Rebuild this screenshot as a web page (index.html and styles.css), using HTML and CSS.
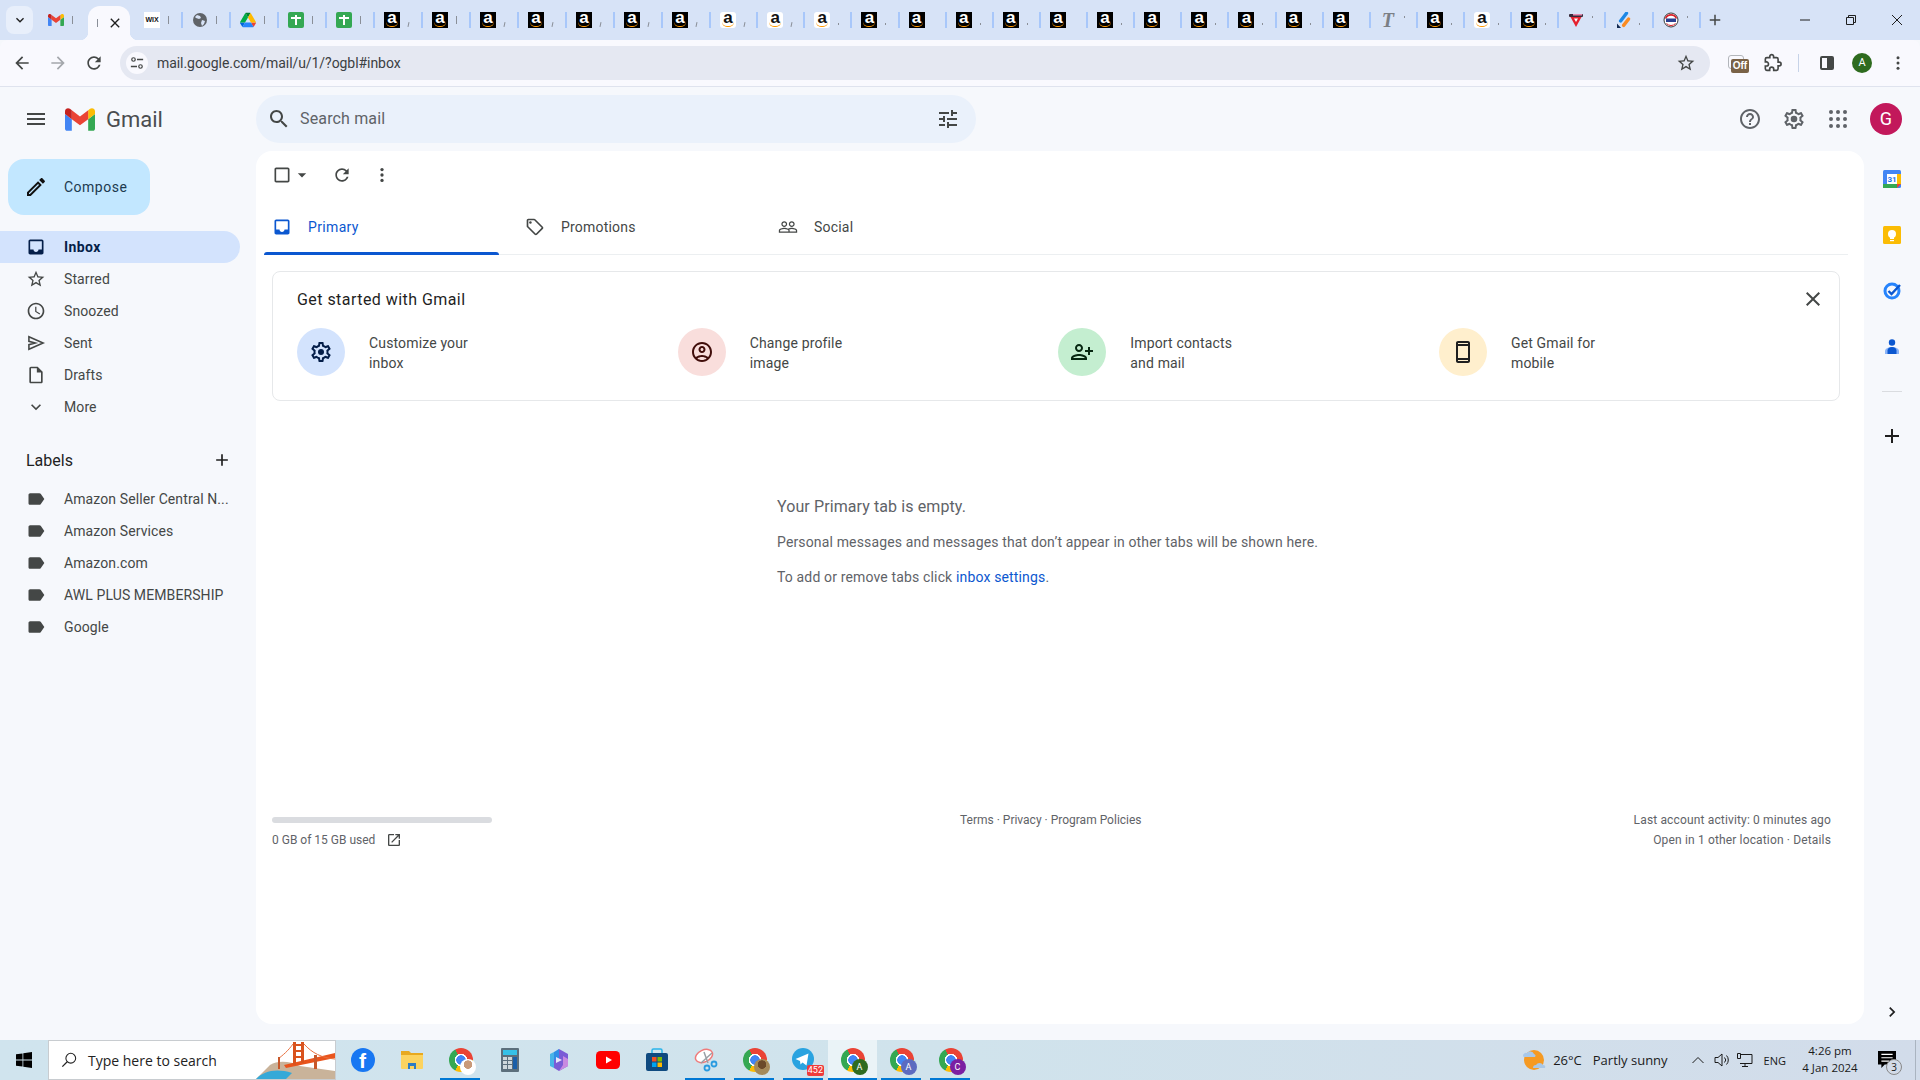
FILE: index.html
```html
<!DOCTYPE html>
<html lang="en">

<head>
    <meta charset="UTF-8">
    <meta name="viewport" content="width=device-width, initial-scale=1.0">
    <title>Inbox - Gmail</title>
    <link rel="stylesheet" href="styles.css">
</head>

<body>

    <!-- Icones reutilisees -->
    <svg class="defs" width="0" height="0">
        <symbol id="i-star" viewBox="0 0 24 24"><path d="M22 9.24l-7.19-.62L12 2 9.19 8.63 2 9.24l5.46 4.73L5.82 21 12 17.27 18.18 21l-1.63-7.03L22 9.24zM12 15.4l-3.76 2.27 1-4.28-3.32-2.88 4.38-.38L12 6.1l1.71 4.04 4.38.38-3.32 2.88 1 4.28L12 15.4z"/></symbol>
        <symbol id="i-label" viewBox="0 0 24 24"><path d="M17.63 5.84C17.27 5.33 16.67 5 16 5L5 5.01C3.9 5.01 3 5.9 3 7v10c0 1.1.9 1.99 2 1.99L16 19c.67 0 1.27-.33 1.63-.84L22 12l-4.37-6.16z"/></symbol>
        <symbol id="i-add" viewBox="0 0 24 24"><path d="M19 13h-6v6h-2v-6H5v-2h6V5h2v6h6v2z"/></symbol>
        <symbol id="i-inbox" viewBox="0 0 24 24"><path d="M19 3H5c-1.1 0-2 .9-2 2v14c0 1.1.9 2 2 2h14c1.1 0 2-.9 2-2V5c0-1.1-.9-2-2-2zm0 12h-4c0 1.66-1.35 3-3 3s-3-1.34-3-3H5V5h14v10z"/></symbol>
    </svg>

    <!-- Barre d'onglets du navigateur -->
    <div class="tabstrip">
        <button class="tab-search"><svg class="ico-16" viewBox="0 0 24 24"><path d="M7.41 8.59L12 13.17l4.59-4.58L18 10l-6 6-6-6z"/></svg></button>
        <div class="tabs">
            <div class="tab"><svg class="fav" viewBox="52 42 88 66"><path fill="#4285f4" d="M58 108h14V74L52 59v43c0 3.32 2.69 6 6 6"/><path fill="#34a853" d="M120 108h14c3.32 0 6-2.69 6-6V59l-20 15"/><path fill="#fbbc04" d="M120 48v26l20-15v-8c0-7.42-8.47-11.65-14.4-7.2"/><path fill="#ea4335" d="M72 74V48l24 18 24-18v26L96 92"/><path fill="#c5221f" d="M52 51v8l20 15V48l-5.6-4.2c-5.94-4.45-14.4-.22-14.4 7.2"/></svg><i class="mark"></i></div>
            <div class="tab tab-active"><i class="mark"></i><svg class="tab-close" viewBox="0 0 24 24"><path d="M19 6.41L17.59 5 12 10.59 6.41 5 5 6.41 10.59 12 5 17.59 6.41 19 12 13.41 17.59 19 19 17.59 13.41 12z"/></svg></div>
            <div class="tab"><span class="fav fav-wix">WIX</span><i class="mark"></i></div>
            <div class="tab sep"><svg class="fav" viewBox="0 0 16 16"><circle cx="8" cy="8" r="7" fill="#5f6368"/><path fill="#d7e3f7" d="M5 3l3 1 1 2-2 1-3-1-1-1zM10 8l3 1-1 3-2 2-1-3z"/></svg><i class="mark"></i></div>
            <div class="tab sep"><svg class="fav" viewBox="0 0 87.3 78"><path d="m6.6 66.85 3.85 6.65c.8 1.4 1.95 2.5 3.3 3.3l13.75-23.8h-27.5c0 1.55.4 3.1 1.2 4.5z" fill="#0066da"/><path d="m43.65 25-13.75-23.8c-1.35.8-2.5 1.9-3.3 3.3l-25.4 44a9.06 9.06 0 0 0 -1.2 4.5h27.5z" fill="#00ac47"/><path d="m73.55 76.8c1.35-.8 2.5-1.9 3.3-3.3l1.6-2.75 7.65-13.25c.8-1.4 1.2-2.95 1.2-4.5h-27.502l5.852 11.5z" fill="#ea4335"/><path d="m43.65 25 13.75-23.8c-1.35-.8-2.9-1.2-4.5-1.2h-18.5c-1.6 0-3.15.45-4.5 1.2z" fill="#00832d"/><path d="m59.8 53h-32.3l-13.75 23.8c1.35.8 2.9 1.2 4.5 1.2h50.8c1.6 0 3.15-.45 4.5-1.2z" fill="#2684fc"/><path d="m73.4 26.5-12.7-22c-.8-1.4-1.95-2.5-3.3-3.3l-13.75 23.8 16.15 28h27.45c0-1.55-.4-3.1-1.2-4.5z" fill="#ffba00"/></svg><i class="mark"></i></div>
            <div class="tab sep"><span class="fav fav-sheet"></span><i class="mark"></i></div>
            <div class="tab sep"><span class="fav fav-sheet"></span><i class="mark"></i></div>
            <div class="tab sep"><span class="fav amz">a</span><i class="mark short"></i></div>
            <div class="tab sep"><span class="fav amz">a</span><i class="mark"></i></div>
            <div class="tab sep"><span class="fav amz">a</span><i class="mark short"></i></div>
            <div class="tab sep"><span class="fav amz">a</span><i class="mark short"></i></div>
            <div class="tab sep"><span class="fav amz">a</span><i class="mark short"></i></div>
            <div class="tab sep"><span class="fav amz">a</span><i class="mark short"></i></div>
            <div class="tab sep"><span class="fav amz">a</span><i class="mark short"></i></div>
            <div class="tab sep narrow"><span class="fav amz light">a</span><i class="mark short"></i></div>
            <div class="tab sep narrow"><span class="fav amz light">a</span><i class="mark short"></i></div>
            <div class="tab sep narrow"><span class="fav amz light">a</span><i class="mark dot"></i></div>
            <div class="tab sep narrow"><span class="fav amz">a</span><i class="mark dot"></i></div>
            <div class="tab sep narrow"><span class="fav amz">a</span></div>
            <div class="tab sep narrow"><span class="fav amz">a</span><i class="mark dot"></i></div>
            <div class="tab sep narrow"><span class="fav amz">a</span><i class="mark dot"></i></div>
            <div class="tab sep narrow"><span class="fav amz">a</span></div>
            <div class="tab sep narrow"><span class="fav amz">a</span><i class="mark dot"></i></div>
            <div class="tab sep narrow"><span class="fav amz">a</span></div>
            <div class="tab sep narrow"><span class="fav amz">a</span><i class="mark dot"></i></div>
            <div class="tab sep narrow"><span class="fav amz">a</span><i class="mark dot"></i></div>
            <div class="tab sep narrow"><span class="fav amz">a</span><i class="mark dot"></i></div>
            <div class="tab sep narrow"><span class="fav amz">a</span></div>
            <div class="tab sep narrow"><span class="fav fav-t">T</span><i class="mark dot up"></i></div>
            <div class="tab sep narrow"><span class="fav amz">a</span><i class="mark dot"></i></div>
            <div class="tab sep narrow"><span class="fav amz light">a</span><i class="mark dot"></i></div>
            <div class="tab sep narrow"><span class="fav amz">a</span><i class="mark dot"></i></div>
            <div class="tab sep narrow"><svg class="fav" viewBox="0 0 16 16"><path fill="#e5202e" d="M2.5 5h11L8 15z"/><path fill="#fff" d="M6 6.5h4L8 10z"/><rect x="1" y="2" width="14" height="3" rx="1" fill="#3a2a3a"/><rect x="5" y="2" width="9" height="1.5" fill="#e58ab0"/></svg><i class="mark dot up"></i></div>
            <div class="tab sep narrow"><svg class="fav" viewBox="0 0 16 16"><path d="M5.6 9L11.5 1.2" stroke="#1e88e5" stroke-width="3.4" stroke-linecap="round"/><path d="M8.6 13.4L13.6 7" stroke="#fb8c22" stroke-width="3.4" stroke-linecap="round"/><path fill="#12294f" d="M2 11.5L6 16H2z"/></svg><i class="mark dot"></i></div>
            <div class="tab sep narrow"><svg class="fav" viewBox="0 0 16 16"><circle cx="8" cy="8" r="7" fill="#fff" stroke="#3a3a3a"/><path fill="none" stroke="#d8222c" stroke-width="1.6" d="M2.5 6.5A6 6 0 0 1 13.5 6.5"/><rect x="3" y="6.5" width="10" height="3.5" fill="#2b3f8f"/><path fill="none" stroke="#d8222c" d="M3.5 11.5A6 6 0 0 0 12.5 11.5"/></svg><i class="mark dot up"></i></div>
            <div class="tab sep new-tab"><svg class="ico-18" viewBox="0 0 24 24"><use href="#i-add"/></svg></div>
        </div>
        <div class="win-controls">
            <svg class="win-ico" viewBox="0 0 12 12"><path d="M1 6h10" /></svg>
            <svg class="win-ico" viewBox="0 0 12 12"><path d="M1.5 3.5h7v7h-7zM3.5 3.5v-2h7v7h-2"/></svg>
            <svg class="win-ico" viewBox="0 0 12 12"><path d="M1 1l10 10M11 1L1 11"/></svg>
        </div>
    </div>

    <!-- Barre d'adresse -->
    <div class="toolbar">
        <svg class="tb-ico" viewBox="0 0 24 24"><path d="M20 11H7.83l5.59-5.59L12 4l-8 8 8 8 1.41-1.41L7.83 13H20v-2z"/></svg>
        <svg class="tb-ico tb-off" viewBox="0 0 24 24"><path d="M4 11h12.17l-5.59-5.59L12 4l8 8-8 8-1.41-1.41L16.17 13H4v-2z"/></svg>
        <svg class="tb-ico" viewBox="0 0 24 24"><path d="M17.65 6.35C16.2 4.9 14.21 4 12 4c-4.42 0-7.99 3.58-7.99 8s3.57 8 7.99 8c3.73 0 6.84-2.55 7.73-6h-2.08c-.82 2.33-3.04 4-5.65 4-3.31 0-6-2.69-6-6s2.69-6 6-6c1.66 0 3.14.69 4.22 1.78L13 11h7V4l-2.35 2.35z"/></svg>
        <div class="omnibox">
            <span class="site-info"><svg viewBox="0 0 16 16" width="14" height="14"><circle cx="4" cy="4" r="2" fill="none" stroke="#444746" stroke-width="1.4"/><path d="M8 4h7M1 12h7" stroke="#444746" stroke-width="1.6"/><circle cx="12" cy="12" r="2" fill="none" stroke="#444746" stroke-width="1.4"/></svg></span>
            <span class="url">mail.google.com/mail/u/1/?ogbl#inbox</span>
            <svg class="omni-star" viewBox="0 0 24 24"><use href="#i-star"/></svg>
        </div>
        <span class="ext-off"><i class="ext-back"></i><b>Off</b></span>
        <svg class="puzzle" viewBox="0 0 24 24"><path fill="none" stroke="#444746" stroke-width="2.2" d="M20.5 11H19V7c0-1.1-.9-2-2-2h-4V3.500C13 2.120 11.880 1 10.500 1S8 2.120 8 3.500V5H4c-1.100 0-1.990.9-1.990 2v3.800H3.500c1.490 0 2.700 1.210 2.700 2.700s-1.210 2.700-2.700 2.700H2V20c0 1.100.9 2 2 2h3.800v-1.500c0-1.490 1.210-2.700 2.700-2.700 1.490 0 2.700 1.210 2.700 2.700V22H17c1.100 0 2-.9 2-2v-4h1.500c1.380 0 2.500-1.120 2.500-2.500S21.880 11 20.500 11z" transform="translate(1 1) scale(.9)"/></svg>
        <i class="tb-sep"></i>
        <span class="sidepanel"><i></i></span>
        <span class="chrome-avatar">A</span>
        <svg class="tb-dots" viewBox="0 0 24 24"><circle cx="12" cy="5" r="2"/><circle cx="12" cy="12" r="2"/><circle cx="12" cy="19" r="2"/></svg>
    </div>

    <div class="gmail">
        <header class="gm-header">
            <div class="brand">
                <svg class="ico-24 menu" viewBox="0 0 24 24"><path d="M3 18h18v-2H3v2zm0-5h18v-2H3v2zm0-7v2h18V6H3z"/></svg>
                <svg class="gm-logo" viewBox="52 42 88 66"><path fill="#4285f4" d="M58 108h14V74L52 59v43c0 3.32 2.69 6 6 6"/><path fill="#34a853" d="M120 108h14c3.32 0 6-2.69 6-6V59l-20 15"/><path fill="#fbbc04" d="M120 48v26l20-15v-8c0-7.42-8.47-11.65-14.4-7.2"/><path fill="#ea4335" d="M72 74V48l24 18 24-18v26L96 92"/><path fill="#c5221f" d="M52 51v8l20 15V48l-5.6-4.2c-5.94-4.45-14.4-.22-14.4 7.2"/></svg>
                <span class="gm-name">Gmail</span>
            </div>
            <div class="searchbar">
                <svg class="ico-24" viewBox="0 0 24 24"><path d="M15.5 14h-.79l-.28-.27C15.41 12.59 16 11.11 16 9.5 16 5.910 13.090 3 9.500 3S3 5.910 3 9.500 5.910 16 9.500 16c1.610 0 3.090-.59 4.230-1.570l.27.28v.79l5 4.990L20.490 19l-4.990-5zm-6 0C7.010 14 5 11.990 5 9.500S7.010 5 9.500 5 14 7.010 14 9.500 11.990 14 9.500 14z"/></svg>
                <span class="search-text">Search mail</span>
                <svg class="ico-24 tune" viewBox="0 0 24 24"><path d="M3 17v2h6v-2H3zM3 5v2h10V5H3zm10 16v-2h8v-2h-8v-2h-2v6h2zM7 9v2H3v2h4v2h2V9H7zm14 4v-2H11v2h10zm-6-4h2V7h4V5h-4V3h-2v6z"/></svg>
            </div>
            <div class="head-right">
                <svg class="ico-24" viewBox="0 0 24 24"><path d="M11 18h2v-2h-2v2zm1-16C6.480 2 2 6.480 2 12s4.480 10 10 10 10-4.480 10-10S17.520 2 12 2zm0 18c-4.410 0-8-3.590-8-8s3.590-8 8-8 8 3.590 8 8-3.590 8-8 8zm0-14c-2.210 0-4 1.790-4 4h2c0-1.100.9-2 2-2s2 .9 2 2c0 2-3 1.750-3 5h2c0-2.250 3-2.500 3-5 0-2.210-1.790-4-4-4z"/></svg>
                <svg class="ico-24" viewBox="0 0 24 24"><path d="M19.43 12.98c.04-.32.07-.64.07-.98 0-.34-.03-.66-.07-.98l2.11-1.65c.19-.15.24-.42.12-.64l-2-3.460c-.09-.16-.26-.25-.44-.25-.06 0-.12.01-.17.03l-2.490 1c-.52-.4-1.080-.73-1.690-.98l-.38-2.650C14.460 2.180 14.250 2 14 2h-4c-.25 0-.46.18-.49.42l-.38 2.650c-.61.25-1.170.59-1.690.98l-2.490-1c-.06-.02-.12-.03-.18-.03-.17 0-.34.09-.43.25l-2 3.460c-.13.22-.07.49.12.64l2.110 1.650c-.04.32-.07.65-.07.98 0 .33.03.66.07.98l-2.110 1.650c-.19.15-.24.42-.12.64l2 3.460c.09.16.26.25.44.25.06 0 .12-.01.17-.03l2.490-1c.52.4 1.080.73 1.690.98l.38 2.650c.03.24.24.42.49.42h4c.25 0 .46-.18.49-.42l.38-2.650c.61-.25 1.170-.59 1.690-.98l2.490 1c.06.02.12.03.18.03.17 0 .34-.09.43-.25l2-3.460c.12-.22.07-.49-.12-.64l-2.110-1.650zm-1.980-1.710c.04.31.05.52.05.73 0 .21-.02.43-.05.73l-.14 1.130.89.7 1.080.84-.7 1.210-1.270-.51-1.040-.42-.9.68c-.43.32-.84.56-1.250.73l-1.060.43-.16 1.130-.2 1.350h-1.400l-.19-1.350-.16-1.130-1.060-.43c-.43-.18-.83-.41-1.230-.71l-.91-.7-1.060.43-1.270.51-.7-1.210 1.080-.84.89-.7-.14-1.130c-.03-.31-.05-.54-.05-.74s.02-.43.05-.73l.14-1.130-.89-.7-1.080-.84.7-1.210 1.270.51 1.040.42.9-.68c.43-.32.84-.56 1.250-.73l1.060-.43.16-1.130.2-1.350h1.390l.19 1.350.16 1.130 1.060.43c.43.18.83.41 1.230.71l.91.7 1.060-.43 1.270-.51.7 1.210-1.070.85-.89.7.14 1.130z"/><circle cx="12" cy="12" r="3.300"/></svg>
                <svg class="ico-24" viewBox="0 0 24 24"><circle cx="5" cy="5" r="2"/><circle cx="12" cy="5" r="2"/><circle cx="19" cy="5" r="2"/><circle cx="5" cy="12" r="2"/><circle cx="12" cy="12" r="2"/><circle cx="19" cy="12" r="2"/><circle cx="5" cy="19" r="2"/><circle cx="12" cy="19" r="2"/><circle cx="19" cy="19" r="2"/></svg>
                <span class="avatar">G</span>
            </div>
        </header>

        <div class="gm-body">
            <!-- Colonne de gauche -->
            <aside class="sidebar">
                <button class="compose">
                    <svg class="ico-24 pen" viewBox="0 0 24 24"><path d="M3 17.250V21h3.750L17.810 9.940l-3.750-3.750L3 17.250zM5.920 19H5v-.92l9.060-9.060.92.92L5.920 19zM20.710 5.630l-2.340-2.340c-.2-.2-.45-.29-.71-.29s-.51.1-.7.29l-1.830 1.830 3.750 3.750 1.830-1.830c.39-.39.39-1.020 0-1.410z"/></svg>
                    Compose
                </button>
                <ul class="nav-list">
                    <li class="nav-item active"><svg class="ico-20" viewBox="0 0 24 24"><use href="#i-inbox"/></svg>Inbox</li>
                    <li class="nav-item"><svg class="ico-20" viewBox="0 0 24 24"><use href="#i-star"/></svg>Starred</li>
                    <li class="nav-item"><svg class="ico-20" viewBox="0 0 24 24"><path d="M11.990 2C6.470 2 2 6.480 2 12s4.470 10 9.990 10C17.520 22 22 17.520 22 12S17.520 2 11.990 2zM12 20c-4.420 0-8-3.580-8-8s3.580-8 8-8 8 3.580 8 8-3.580 8-8 8zm.5-13H11v6l5.250 3.150.75-1.230-4.500-2.670z"/></svg>Snoozed</li>
                    <li class="nav-item"><svg class="ico-20 outline" viewBox="0 0 24 24"><path d="M3.500 4.500L20.500 12L3.500 19.500V14L11 12L3.500 10z"/></svg>Sent</li>
                    <li class="nav-item"><svg class="ico-20" viewBox="0 0 24 24"><path d="M14 2H6c-1.100 0-1.990.9-1.990 2L4 20c0 1.100.89 2 1.990 2H18c1.100 0 2-.9 2-2V8l-6-6zM6 20V4h7v5h5v11H6z"/></svg>Drafts</li>
                    <li class="nav-item"><svg class="ico-20" viewBox="0 0 24 24"><path d="M7.410 8.590L12 13.170l4.590-4.580L18 10l-6 6-6-6z"/></svg>More</li>
                </ul>
                <div class="labels-head">
                    <span>Labels</span>
                    <svg class="ico-20" viewBox="0 0 24 24"><use href="#i-add"/></svg>
                </div>
                <ul class="nav-list">
                    <li class="nav-item"><svg class="ico-20" viewBox="0 0 24 24"><use href="#i-label"/></svg>Amazon Seller Central N...</li>
                    <li class="nav-item"><svg class="ico-20" viewBox="0 0 24 24"><use href="#i-label"/></svg>Amazon Services</li>
                    <li class="nav-item"><svg class="ico-20" viewBox="0 0 24 24"><use href="#i-label"/></svg>Amazon.com</li>
                    <li class="nav-item"><svg class="ico-20" viewBox="0 0 24 24"><use href="#i-label"/></svg>AWL PLUS MEMBERSHIP</li>
                    <li class="nav-item"><svg class="ico-20" viewBox="0 0 24 24"><use href="#i-label"/></svg>Google</li>
                </ul>
            </aside>

            <!-- Panneau central -->
            <main class="panel">
                <div class="mail-actions">
                    <svg class="ico-20" viewBox="0 0 24 24"><path d="M19 5v14H5V5h14m0-2H5c-1.100 0-2 .9-2 2v14c0 1.100.9 2 2 2h14c1.100 0 2-.9 2-2V5c0-1.100-.9-2-2-2z"/></svg>
                    <svg class="ico-20" viewBox="0 0 24 24"><path d="M7 10l5 5 5-5z"/></svg>
                    <svg class="ico-20 refresh" viewBox="0 0 24 24"><path d="M17.650 6.350C16.200 4.900 14.210 4 12 4c-4.420 0-7.990 3.580-7.990 8s3.570 8 7.990 8c3.730 0 6.840-2.550 7.730-6h-2.080c-.82 2.330-3.040 4-5.650 4-3.310 0-6-2.690-6-6s2.690-6 6-6c1.660 0 3.140.69 4.220 1.780L13 11h7V4l-2.350 2.350z"/></svg>
                    <svg class="ico-20 refresh" viewBox="0 0 24 24"><circle cx="12" cy="5.500" r="2"/><circle cx="12" cy="12" r="2"/><circle cx="12" cy="18.500" r="2"/></svg>
                </div>

                <div class="mail-tabs">
                    <div class="mail-tab selected"><svg class="ico-20" viewBox="0 0 24 24"><use href="#i-inbox"/></svg>Primary</div>
                    <div class="mail-tab"><svg class="ico-20" viewBox="0 0 24 24"><path d="M21.410 11.580l-9-9C12.050 2.220 11.550 2 11 2H4c-1.100 0-2 .9-2 2v7c0 .55.22 1.050.59 1.420l9 9c.36.36.86.58 1.410.58s1.050-.22 1.410-.59l7-7c.37-.36.59-.86.59-1.410s-.23-1.060-.59-1.420zM13 20.010L4 11V4h7v-.01l9 9-7 7.020z"/><circle cx="6.500" cy="6.500" r="1.500"/></svg>Promotions</div>
                    <div class="mail-tab"><svg class="ico-20" viewBox="0 0 24 24"><path d="M16.500 13c-1.200 0-3.070.34-4.500 1-1.430-.67-3.300-1-4.500-1C5.330 13 1 14.080 1 16.250V19h22v-2.750c0-2.170-4.330-3.250-6.500-3.250zm-4 4.500h-10v-1.250c0-.54 2.560-1.750 5-1.750s5 1.210 5 1.750v1.250zm9 0H14v-1.250c0-.46-.2-.86-.52-1.220.88-.3 1.960-.53 3.020-.53 2.440 0 5 1.210 5 1.750v1.250zM7.500 12c1.930 0 3.500-1.570 3.500-3.500S9.430 5 7.500 5 4 6.570 4 8.500 5.570 12 7.500 12zm0-5.500c1.100 0 2 .9 2 2s-.9 2-2 2-2-.9-2-2 .9-2 2-2zm9 5.500c1.930 0 3.500-1.570 3.500-3.500S18.430 5 16.500 5 13 6.570 13 8.500s1.570 3.500 3.500 3.500zm0-5.500c1.100 0 2 .9 2 2s-.9 2-2 2-2-.9-2-2 .9-2 2-2z"/></svg>Social</div>
                </div>

                <section class="started">
                    <div class="started-head">
                        <h2>Get started with Gmail</h2>
                        <svg class="ico-24 started-close" viewBox="0 0 24 24"><path d="M19 6.410L17.590 5 12 10.590 6.410 5 5 6.410 10.590 12 5 17.590 6.410 19 12 13.410 17.590 19 19 17.590 13.410 12z"/></svg>
                    </div>
                    <div class="started-items">
                        <div class="step">
                            <span class="step-ico blue"><svg class="ico-24" viewBox="0 0 24 24"><path d="M19.430 12.980c.04-.32.07-.64.07-.98 0-.34-.03-.66-.07-.98l2.110-1.650c.19-.15.24-.42.12-.64l-2-3.46c-.09-.16-.26-.25-.44-.25-.06 0-.12.01-.17.03l-2.490 1c-.52-.4-1.080-.73-1.690-.98l-.38-2.650C14.460 2.180 14.250 2 14 2h-4c-.25 0-.46.18-.49.42l-.38 2.650c-.61.25-1.170.59-1.690.98l-2.490-1c-.06-.02-.12-.03-.18-.03-.17 0-.34.09-.43.25l-2 3.46c-.13.22-.07.49.12.64l2.110 1.650c-.04.32-.07.65-.07.98 0 .33.03.66.07.98l-2.110 1.650c-.19.15-.24.42-.12.64l2 3.46c.09.16.26.25.44.25.06 0 .12-.01.17-.03l2.490-1c.52.4 1.080.73 1.690.98l.38 2.650c.03.24.24.42.49.42h4c.25 0 .46-.18.49-.42l.38-2.650c.61-.25 1.170-.59 1.690-.98l2.490 1c.06.02.12.03.18.03.17 0 .34-.09.43-.25l2-3.46c.12-.22.07-.49-.12-.64l-2.110-1.650zm-1.980-1.710c.04.31.05.52.05.73 0 .21-.02.43-.05.73l-.14 1.130.89.7 1.080.84-.7 1.210-1.270-.51-1.040-.42-.9.68c-.43.32-.84.56-1.250.73l-1.060.43-.16 1.130-.2 1.350h-1.400l-.19-1.350-.16-1.130-1.060-.43c-.43-.18-.83-.41-1.230-.71l-.91-.7-1.060.43-1.270.51-.7-1.210 1.080-.84.89-.7-.14-1.130c-.03-.31-.05-.54-.05-.74s.02-.43.05-.73l.14-1.130-.89-.7-1.080-.84.7-1.210 1.270.51 1.040.42.9-.68c.43-.32.84-.56 1.250-.73l1.060-.43.16-1.130.2-1.350h1.390l.19 1.350.16 1.130 1.060.43c.43.18.83.41 1.230.71l.91.7 1.060-.43 1.270-.51.7 1.210-1.070.85-.89.7.14 1.130z"/><circle cx="12" cy="12" r="3"/></svg></span>
                            <p>Customize your<br>inbox</p>
                        </div>
                        <div class="step">
                            <span class="step-ico red"><svg class="ico-24" viewBox="0 0 24 24"><path d="M12 2C6.480 2 2 6.480 2 12s4.480 10 10 10 10-4.480 10-10S17.520 2 12 2zM7.350 18.500C8.660 17.560 10.260 17 12 17s3.340.56 4.650 1.500C15.340 19.440 13.740 20 12 20s-3.340-.56-4.650-1.500zm10.790-1.380C16.450 15.800 14.320 15 12 15s-4.450.8-6.140 2.120C4.700 15.730 4 13.950 4 12c0-4.420 3.580-8 8-8s8 3.580 8 8c0 1.950-.7 3.730-1.860 5.120zM12 6c-1.930 0-3.500 1.570-3.500 3.500S10.070 13 12 13s3.500-1.570 3.500-3.500S13.930 6 12 6zm0 5c-.83 0-1.500-.67-1.500-1.500S11.170 8 12 8s1.500.67 1.500 1.500S12.830 11 12 11z"/></svg></span>
                            <p>Change profile<br>image</p>
                        </div>
                        <div class="step">
                            <span class="step-ico green"><svg class="ico-24 flip" viewBox="0 0 24 24"><path d="M15 12c2.210 0 4-1.790 4-4s-1.790-4-4-4-4 1.790-4 4 1.790 4 4 4zm0-6c1.100 0 2 .9 2 2s-.9 2-2 2-2-.9-2-2 .9-2 2-2zm0 8c-2.670 0-8 1.340-8 4v2h16v-2c0-2.660-5.330-4-8-4zm-6 4c.22-.72 3.310-2 6-2 2.700 0 5.800 1.290 6 2H9zm-3-3v-3h3v-2H6V7H4v3H1v2h3v3h2z"/></svg></span>
                            <p>Import contacts<br>and mail</p>
                        </div>
                        <div class="step">
                            <span class="step-ico yellow"><svg class="ico-24" viewBox="0 0 24 24"><path d="M17 1H7c-1.100 0-2 .9-2 2v18c0 1.100.9 2 2 2h10c1.100 0 2-.9 2-2V3c0-1.100-.9-2-2-2zM7 4V3h10v1H7zm0 14V6h10v12H7zm0 3v-1h10v1H7z"/></svg></span>
                            <p>Get Gmail for<br>mobile</p>
                        </div>
                    </div>
                </section>

                <div class="empty">
                    <h3>Your Primary tab is empty.</h3>
                    <p>Personal messages and messages that don&rsquo;t appear in other tabs will be shown here.</p>
                    <p>To add or remove tabs click <a href="#">inbox settings</a>.</p>
                </div>

                <footer class="mail-foot">
                    <div class="foot-storage">
                        <div class="bar-row"><i class="storage-bar"></i></div>
                        <div class="foot-line">0 GB of 15 GB used <svg class="ico-16 open" viewBox="0 0 24 24"><path d="M19 19H5V5h7V3H5c-1.110 0-2 .9-2 2v14c0 1.100.89 2 2 2h14c1.100 0 2-.9 2-2v-7h-2v7zM14 3v2h3.590l-9.830 9.830 1.410 1.410L19 6.410V10h2V3h-7z"/></svg></div>
                    </div>
                    <div class="foot-line">Terms &middot; Privacy &middot; Program Policies</div>
                    <div class="foot-right">
                        <div class="foot-line">Last account activity: 0 minutes ago</div>
                        <div class="foot-line">Open in 1 other location &middot; Details</div>
                    </div>
                </footer>
            </main>

            <!-- Panneau lateral des applications -->
            <aside class="addons">
                <svg class="addon" viewBox="0 0 20 20"><rect x="1" y="1" width="18" height="18" rx="1.500" fill="#4285f4"/><rect x="1" y="15" width="14" height="4" fill="#34a853"/><rect x="15" y="5" width="4" height="10" fill="#fbbc04"/><path d="M15 15h4l-4 4z" fill="#ea4335"/><rect x="5" y="5" width="10" height="10" fill="#fff"/><text x="10" y="13" class="cal-num">31</text></svg>
                <svg class="addon" viewBox="0 0 20 20"><rect x="1" y="1" width="18" height="18" rx="1.500" fill="#fbbc04"/><circle cx="10" cy="9" r="4" fill="#fff"/><rect x="8" y="12" width="4" height="2" fill="#fff"/><rect x="8" y="15" width="4" height="1.200" fill="#fff"/></svg>
                <svg class="addon" viewBox="0 0 20 20"><circle cx="10" cy="10" r="7" fill="none" stroke="#2684fc" stroke-width="3"/><path d="M6.500 10l3 3L18 4" fill="none" stroke="#0b57d0" stroke-width="2.400"/></svg>
                <svg class="addon" viewBox="0 0 20 20"><circle cx="10" cy="5.500" r="3.200" fill="#0b57d0"/><path d="M3 17v-3c0-2 3-4 7-4s7 2 7 4v3z" fill="#8ab4f8"/><path d="M5.500 17v-3.500c0-2 2-3.500 4.500-3.500s4.500 1.500 4.500 3.500V17z" fill="#0b57d0"/></svg>
                <i class="addon-sep"></i>
                <svg class="ico-24 addon-plus" viewBox="0 0 24 24"><use href="#i-add"/></svg>
                <svg class="ico-20 addon-more" viewBox="0 0 24 24"><path d="M8.590 16.590L13.170 12 8.590 7.410 10 6l6 6-6 6z"/></svg>
            </aside>
        </div>
    </div>

    <!-- Barre des taches Windows -->
    <div class="taskbar">
        <svg class="win-logo" viewBox="0 0 16 16"><path d="M0 2.300l6.500-.9v6.200H0zM7.300 1.300L16 0v7.600H7.300zM0 8.400h6.500v6.200L0 13.700zM7.300 8.400H16V16l-8.700-1.300z"/></svg>
        <div class="win-search">
            <svg class="ws-glass" viewBox="0 0 18 18"><circle cx="11" cy="7" r="5.500" fill="none" stroke="#222" stroke-width="1.200"/><path d="M7 11l-5.500 5.500" stroke="#222" stroke-width="1.400"/></svg>
            <span class="ws-text">Type here to search</span>
            <svg class="ws-scene" viewBox="0 0 79 38"><path d="M0 38l14-14c8-5 20-4 30 1l35 5v8z" fill="#c9b39a"/><path d="M0 38c8-8 20-11 36-6l-6 6z" fill="#35a9d8"/><path d="M28 24L79 12v5L30 27z" fill="#e9541c"/><path d="M37 1h3v23h-3zM45 1h3v21h-3z" fill="#d9531e"/><path d="M37 3h11v2H37zM37 9h11v2H37zM37 15h11v2H37z" fill="#d9531e"/><path d="M48 3c8 9 18 14 31 15M37 3C32 10 27 14 22 18" fill="none" stroke="#e9713f"/><path d="M22 16h2v12h-2zM58 14h3v14h-3z" fill="#c8582a"/></svg>
        </div>
        <div class="task-apps">
            <div class="task"><span class="tk-fb">f</span></div>
            <div class="task"><svg class="tk-ico" viewBox="0 0 24 24"><path d="M1 3h8l2 2h12v3H1z" fill="#e8a91f"/><path d="M1 7h22v13a1 1 0 0 1-1 1H2a1 1 0 0 1-1-1z" fill="#fcd35f"/><path d="M8 21v-6h8v6h-2v-3h-4v3z" fill="#2e7cc4"/></svg></div>
            <div class="task running"><span class="tk-chrome"><i class="tk-badge photo"></i></span></div>
            <div class="task"><svg class="tk-ico" viewBox="0 0 24 24"><rect x="3" y="0" width="18" height="24" rx="1" fill="#5c6f7c"/><rect x="5" y="2" width="14" height="5" fill="#35c1e8"/><path d="M5 9h4v3H5zM10 9h4v3h-4zM5 13h4v3H5zM10 13h4v3h-4zM5 17h4v4H5zM10 17h4v4h-4z" fill="#cfd8dc"/><rect x="15" y="9" width="4" height="12" fill="#1a5fa8"/></svg></div>
            <div class="task"><svg class="tk-ico" viewBox="0 0 24 24"><path d="M12 1l9 5v12l-9 5-5-3V9z" fill="#7a5bd6"/><path d="M12 1L7 4v7l5 3z" fill="#2f8fe6"/><path d="M12 23l9-5v-7l-5-3v9z" fill="#c88ae0"/><path d="M3 6l4-2v16l-4-2z" fill="#48b4e8"/><path d="M9 9l6 3-6 3z" fill="#e9e4fa"/></svg></div>
            <div class="task"><svg class="tk-ico" viewBox="0 0 24 24"><rect y="3" width="24" height="18" rx="4.500" fill="#f00"/><path d="M10 8.500l6 3.500-6 3.500z" fill="#fff"/></svg></div>
            <div class="task"><svg class="tk-ico" viewBox="0 0 24 24"><path d="M7 5V2.500A1.500 1.500 0 0 1 8.500 1h7A1.500 1.500 0 0 1 17 2.500V5" fill="none" stroke="#28b4ea" stroke-width="1.500"/><rect x="1" y="5" width="22" height="18" rx="2" fill="#0f4a80"/><rect x="7" y="9" width="4.500" height="4.500" fill="#f25022"/><rect x="12.500" y="9" width="4.500" height="4.500" fill="#7fba00"/><rect x="7" y="14.500" width="4.500" height="4.500" fill="#00a4ef"/><rect x="12.500" y="14.500" width="4.500" height="4.500" fill="#ffb900"/></svg></div>
            <div class="task running"><svg class="tk-ico" viewBox="0 0 24 24"><ellipse cx="10" cy="8" rx="9" ry="6" fill="#fff" stroke="#ef7b7b" stroke-width="1.500" transform="rotate(-25 10 8)"/><path d="M10 4l4 11M18 5L7 15" stroke="#9aa0a6" stroke-width="1.500"/><circle cx="13" cy="20" r="2.500" fill="none" stroke="#2a9be0" stroke-width="1.800"/><circle cx="20" cy="16" r="2.500" fill="none" stroke="#2a9be0" stroke-width="1.800"/></svg></div>
            <div class="task running"><span class="tk-chrome"><i class="tk-badge photo dark"></i></span></div>
            <div class="task running"><svg class="tk-ico" viewBox="0 0 24 24"><circle cx="11" cy="11" r="11" fill="#2aa3e0"/><path d="M3.500 11l13-5.500-2 12-4-3-2 2-.5-3.500z" fill="#fff"/></svg><span class="tk-count">452</span></div>
            <div class="task running current"><span class="tk-chrome"><i class="tk-badge green">A</i></span></div>
            <div class="task running"><span class="tk-chrome"><i class="tk-badge indigo">A</i></span></div>
            <div class="task running"><span class="tk-chrome"><i class="tk-badge purple">C</i></span></div>
        </div>
        <div class="tray">
            <svg class="tr-weather" viewBox="0 0 24 24"><circle cx="12" cy="12" r="10" fill="#f59a23"/><path d="M1 8a3 3 0 0 1 4-3 4 4 0 0 1 7 1 2 2 0 0 1 1 3H2a2 2 0 0 1-1-1z" fill="#a9c8e8"/><path d="M11 20a3 3 0 0 1 3-3 4 4 0 0 1 7 0 2 2 0 0 1 2 3z" fill="#a9c8e8"/></svg>
            <span class="tr-temp">26&deg;C</span>
            <span class="tr-sky">Partly sunny</span>
            <svg class="tr-chev" viewBox="0 0 12 8"><path d="M.5 7L6 1.500 11.500 7" fill="none" stroke="#1a1a1a"/></svg>
            <svg class="tr-ico" viewBox="0 0 16 16"><path d="M1 5.500h3L8 2v12L4 10.500H1zM10.500 5.500a3.500 3.500 0 0 1 0 5M12.500 3.500a6.500 6.500 0 0 1 0 9" fill="none" stroke="#1a1a1a"/></svg>
            <svg class="tr-ico tr-net" viewBox="0 0 16 16"><path d="M4 2.500h11v9H3M8 11.500v3M5 14.500h6M.5 1.500h3v5h-3z" fill="none" stroke="#1a1a1a"/></svg>
            <span class="tr-lang">ENG</span>
            <div class="tr-clock"><span>4:26 pm</span><span>4 Jan 2024</span></div>
            <div class="tr-notif">
                <svg class="tr-msg" viewBox="0 0 16 16"><path d="M0 0h16v12H6l-3 3v-3H0z"/><path d="M3 3h10M3 6h10M3 9h7" stroke="#fff"/></svg>
                <span class="tr-count">3</span>
            </div>
            <i class="tr-edge"></i>
        </div>
    </div>

</body>

</html>
```
FILE: styles.css
```css
* {
    box-sizing: border-box;
}

body {
    margin: 0;
    height: 100vh;
    overflow: hidden;
    display: flex;
    flex-direction: column;
    font-family: 'Roboto', 'Liberation Sans', sans-serif;
    font-size: 14px;
    color: #444746;
    background-color: #f6f8fc;
}

.defs {
    position: absolute;
}

svg {
    flex-shrink: 0;
    fill: currentColor;
}

.ico-16 { width: 16px; height: 16px; }
.ico-18 { width: 18px; height: 18px; }
.ico-20 { width: 20px; height: 20px; }
.ico-24 { width: 24px; height: 24px; }

/* Onglets du navigateur */
.tabstrip {
    height: 40px;
    display: flex;
    background-color: #d7e3f7;
    padding-left: 6px;
    flex-shrink: 0;
}

.tab-search {
    width: 27px;
    height: 28px;
    margin-top: 6px;
    margin-right: 4px;
    padding: 0;
    flex-shrink: 0;
    border: none;
    border-radius: 8px;
    background-color: #e8effb;
    color: #1f1f1f;
    display: flex;
    align-items: center;
    justify-content: center;
}

.tabs {
    display: flex;
    flex-shrink: 0;
}

.tab {
    width: 48px;
    height: 40px;
    display: flex;
    align-items: center;
    flex-shrink: 0;
}

.tab::before {
    content: "";
    width: 2px;
    height: 16px;
    flex-shrink: 0;
}

.tab.sep::before {
    background-color: #a8c7fa;
}

.tab.narrow {
    width: 47.14px;
}

.fav {
    width: 16px;
    height: 16px;
    margin-left: 9px;
    flex-shrink: 0;
}

.mark {
    width: 1px;
    height: 8px;
    margin-left: 8px;
    background-color: #8a8f98;
}

.mark.short {
    height: 5px;
    margin-top: 8px;
    transform: rotate(12deg);
}

.mark.dot {
    height: 2px;
    margin-top: 8px;
}

.mark.dot.up {
    margin-top: -6px;
}

.tab-active {
    position: relative;
    width: 42px;
    height: 34px;
    margin: 6px 3px 0;
    background-color: #f9f9fe;
    border-radius: 12px 12px 0 0;
}

.tab-active::before {
    display: none;
}

.tab-active .mark {
    margin-left: 9px;
    flex-shrink: 0;
}

.tab-close {
    width: 16px;
    height: 16px;
    margin-left: 9px;
    color: #1f1f1f;
}

.tab-active::after {
    content: "";
    position: absolute;
    left: -8px;
    right: -8px;
    bottom: 0;
    height: 8px;
    z-index: 0;
    background:
        radial-gradient(circle at 0 0, #d7e3f7 8px, #f9f9fe 8.5px) left / 8px 8px no-repeat,
        radial-gradient(circle at 100% 0, #d7e3f7 8px, #f9f9fe 8.5px) right / 8px 8px no-repeat;
}

.amz {
    position: relative;
    background-color: #000;
    color: #fff;
    font-family: 'Liberation Sans', sans-serif;
    font-weight: 700;
    font-size: 17px;
    line-height: 12px;
    text-align: center;
}

.amz::after {
    content: "";
    position: absolute;
    left: 2px;
    right: 2px;
    bottom: 1px;
    height: 4px;
    border-bottom: 1.5px solid #f90;
    border-radius: 0 0 8px 8px;
}

.amz.light {
    background-color: #fff;
    color: #111;
    border-radius: 3px;
}

.fav-wix {
    background-color: #fff;
    color: #111;
    font-family: 'Liberation Sans', sans-serif;
    font-weight: 700;
    font-size: 7px;
    line-height: 16px;
    text-align: center;
}

.fav-sheet {
    position: relative;
    background-color: #34a853;
    border-radius: 2px;
}

.fav-sheet::before,
.fav-sheet::after {
    content: "";
    position: absolute;
    background-color: #fff;
}

.fav-sheet::before {
    left: 3px;
    right: 3px;
    top: 5px;
    height: 2px;
}

.fav-sheet::after {
    left: 7px;
    top: 3px;
    width: 2px;
    height: 10px;
}

.fav-t {
    font-family: 'Liberation Serif', serif;
    font-style: italic;
    font-weight: 700;
    font-size: 20px;
    line-height: 16px;
    color: #7b7f85;
    text-align: center;
}

.tab.new-tab {
    width: 36px;
}

.new-tab .ico-18 {
    margin-left: 5px;
    color: #444746;
}

.win-controls {
    display: flex;
    align-items: center;
    height: 40px;
    padding-left: 64px;
    gap: 34px;
    padding-right: 17px;
    flex-shrink: 0;
}

.win-ico {
    width: 12px;
    height: 12px;
    fill: none;
    stroke: #1f1f1f;
    stroke-width: 1;
}

/* Barre d'adresse */
.toolbar {
    height: 47px;
    display: flex;
    align-items: center;
    flex-shrink: 0;
    padding-bottom: 1px;
    background-color: #f9f9fe;
    border-bottom: 1px solid #dfe3ee;
    border-radius: 8px 8px 0 0;
    margin-top: 0;
    color: #444746;
}

.tb-ico {
    width: 20px;
    height: 20px;
    margin-left: 16px;
}

.tb-ico:first-child {
    margin-left: 12px;
}

.tb-off {
    color: #a4a7ac;
}

.omnibox {
    width: 1590px;
    height: 34px;
    margin-left: 16px;
    display: flex;
    align-items: center;
    padding: 0 14px 0 6px;
    border-radius: 17px;
    background-color: #e5e8f2;
}

.site-info {
    width: 22px;
    height: 22px;
    border-radius: 50%;
    background-color: #f9f9fe;
    display: flex;
    align-items: center;
    justify-content: center;
}

.url {
    margin-left: 9px;
    color: #3c4043;
    font-size: 14px;
    letter-spacing: -.06px;
}

.omni-star {
    width: 20px;
    height: 20px;
    margin-left: auto;
}

.ext-off {
    position: relative;
    width: 22px;
    height: 18px;
    margin-left: 18px;
    margin-top: 8px;
}

.ext-back {
    position: absolute;
    left: 0;
    top: -3px;
    width: 16px;
    height: 14px;
    border: 1px solid #b3b6bb;
    border-radius: 3px;
}

.ext-off b {
    position: absolute;
    left: 3px;
    top: 1px;
    width: 18px;
    height: 14px;
    border-radius: 2px;
    background-color: #7a6247;
    color: #fff;
    font-family: 'Liberation Sans', sans-serif;
    font-size: 10px;
    line-height: 14px;
    text-align: center;
}

.puzzle {
    width: 20px;
    height: 20px;
    margin-left: 13px;
}

.tb-sep {
    width: 1px;
    height: 18px;
    margin-left: 15px;
    background-color: #c7d3e8;
}

.sidepanel {
    width: 14px;
    height: 14px;
    margin-left: 21px;
    border: 2px solid #444746;
    border-radius: 2px;
    display: flex;
    justify-content: flex-end;
}

.sidepanel i {
    width: 5px;
    background-color: #444746;
}

.chrome-avatar {
    width: 20px;
    height: 20px;
    margin-left: 18px;
    border-radius: 50%;
    background-color: #2e6b1f;
    color: #fff;
    font-size: 11px;
    line-height: 20px;
    text-align: center;
}

.tb-dots {
    width: 18px;
    height: 18px;
    margin-left: 17px;
}

/* Gmail */
.gmail {
    flex-grow: 1;
    display: flex;
    flex-direction: column;
    min-height: 0;
}

.gm-header {
    height: 64px;
    display: flex;
    align-items: center;
    flex-shrink: 0;
}

.brand {
    width: 256px;
    display: flex;
    align-items: center;
    padding-left: 24px;
}

.gm-logo {
    width: 30px;
    height: 23px;
    margin-left: 17px;
}

.gm-name {
    margin-left: 11px;
    font-size: 22px;
    color: #4a4d50;
}

.searchbar {
    width: 720px;
    height: 48px;
    display: flex;
    align-items: center;
    padding: 0 16px 0 11px;
    border-radius: 24px;
    background-color: #eaf1fb;
    color: #444746;
}

.search-text {
    margin-left: 9px;
    padding-bottom: 1px;
    font-size: 16px;
    letter-spacing: .15px;
    color: #5f6368;
}

.tune {
    margin-left: auto;
}

.head-right {
    margin-left: auto;
    display: flex;
    align-items: center;
    gap: 20px;
    padding-right: 18px;
    color: #5f6368;
}

.avatar {
    width: 32px;
    height: 32px;
    border-radius: 50%;
    background-color: #c2185b;
    color: #fff;
    font-size: 18px;
    line-height: 32px;
    text-align: center;
}

.gm-body {
    flex-grow: 1;
    display: flex;
    min-height: 0;
}

/* Colonne de gauche */
.sidebar {
    width: 256px;
    flex-shrink: 0;
}

.compose {
    width: 142px;
    height: 56px;
    margin: 8px 0 16px 8px;
    padding: 0 0 0 16px;
    display: flex;
    align-items: center;
    gap: 16px;
    border: none;
    border-radius: 16px;
    background-color: #c2e7ff;
    color: #1d3a4f;
    font-family: inherit;
    font-size: 14px;
    font-weight: 400;
    letter-spacing: .5px;
}

.pen {
    color: #111;
}

.nav-list {
    list-style: none;
    margin: 0;
    padding: 0;
}

.nav-item {
    width: 240px;
    height: 32px;
    display: flex;
    align-items: center;
    gap: 18px;
    padding-left: 26px;
    border-radius: 0 16px 16px 0;
    color: #444746;
    letter-spacing: .1px;
}

.nav-item .ico-20 {
    color: #444746;
}

.nav-item .outline {
    fill: none;
    stroke: currentColor;
    stroke-width: 1.9;
}

.nav-item.active {
    background-color: #d3e3fd;
    color: #041e49;
    font-weight: 700;
    letter-spacing: .4px;
}

.nav-item.active .ico-20 {
    color: #041e49;
}

.labels-head {
    height: 40px;
    width: 232px;
    margin: 17px 0 3px;
    padding-left: 26px;
    display: flex;
    align-items: center;
    justify-content: space-between;
    font-size: 16px;
    color: #1f1f1f;
}

/* Panneau central */
.panel {
    flex-grow: 1;
    min-width: 0;
    margin-bottom: 16px;
    background-color: #fff;
    border-radius: 16px;
}

.mail-actions {
    height: 48px;
    display: flex;
    align-items: center;
    padding-left: 16px;
    color: #444746;
}

.refresh {
    margin-left: 20px;
}

.mail-tabs {
    height: 56px;
    margin: 0 16px 0 8px;
    display: flex;
    border-bottom: 1px solid #eceff1;
}

.mail-tab {
    position: relative;
    width: 253px;
    display: flex;
    align-items: center;
    gap: 16px;
    padding-left: 8px;
    padding-top: 0;
    color: #444746;
    letter-spacing: .2px;
}

.mail-tab.selected {
    color: #0b57d0;
    letter-spacing: .35px;
}

.mail-tab.selected::after {
    content: "";
    position: absolute;
    left: 0;
    bottom: -1px;
    width: 235px;
    height: 3px;
    border-radius: 3px 3px 0 0;
    background-color: #0b57d0;
}

.started {
    margin: 16px 24px 0 16px;
    height: 130px;
    padding: 15px 24px 0;
    border: 1px solid #e6e8ea;
    border-radius: 8px;
}

.started-head {
    height: 24px;
    display: flex;
    align-items: center;
    justify-content: space-between;
}

.started-head h2 {
    margin: 0;
    font-size: 16px;
    font-weight: 400;
    letter-spacing: .45px;
    color: #1f1f1f;
}

.started-close {
    margin-right: -10px;
}

.started-items {
    margin-top: 17px;
    display: grid;
    grid-template-columns: repeat(4, 380.67px);
}

.step {
    display: flex;
    align-items: center;
    gap: 24px;
}

.step p {
    margin: 0;
    padding-top: 2px;
    line-height: 20px;
    letter-spacing: .15px;
    color: #444746;
}

.step-ico {
    width: 48px;
    height: 48px;
    border-radius: 50%;
    display: flex;
    align-items: center;
    justify-content: center;
}

.step-ico.blue { background-color: #d3e3fd; color: #041e49; }
.step-ico.red { background-color: #f9dedc; color: #410e0b; }
.step-ico.green { background-color: #c4eed0; color: #072711; }
.step-ico.yellow { background-color: #ffefcd; color: #1f1f1f; }

.flip {
    transform: scaleX(-1);
}

.empty {
    margin: 94px 0 0 521px;
}

.empty h3 {
    margin: 0 0 13px;
    font-size: 16px;
    font-weight: 400;
    line-height: 24px;
    letter-spacing: .1px;
    color: #5f6368;
}

.empty p {
    margin: 0 0 15px;
    line-height: 20px;
    letter-spacing: .15px;
    color: #5f6368;
}

.empty a {
    color: #0b57d0;
    text-decoration: none;
}

.mail-foot {
    margin: 223px 33px 0 16px;
    display: grid;
    grid-template-columns: 688px 1fr auto;
    font-size: 12px;
    color: #5f6368;
}

.foot-line {
    height: 20px;
    line-height: 20px;
    display: flex;
    align-items: center;
}

.bar-row {
    height: 20px;
    display: flex;
    align-items: center;
}

.storage-bar {
    width: 220px;
    height: 6px;
    border-radius: 3px;
    background-color: #dadce0;
}

.open {
    margin-left: 11px;
    color: #444746;
}

.foot-right .foot-line {
    justify-content: flex-end;
    letter-spacing: .15px;
}

/* Panneau lateral */
.addons {
    width: 56px;
    flex-shrink: 0;
    display: flex;
    flex-direction: column;
    align-items: center;
    color: #1f1f1f;
}

.addon {
    width: 20px;
    height: 20px;
    margin: 18px 0;
}

.cal-num {
    fill: #1a73e8;
    font-family: 'Roboto', sans-serif;
    font-size: 8px;
    font-weight: 700;
    text-anchor: middle;
}

.addon-sep {
    width: 20px;
    height: 1px;
    margin-top: 16px;
    background-color: #dadce0;
}

.addon-plus {
    margin-top: 32px;
}

.addon-more {
    margin-top: auto;
    margin-bottom: 18px;
}

/* Barre des taches */
.taskbar {
    height: 40px;
    flex-shrink: 0;
    display: flex;
    align-items: center;
    background: linear-gradient(90deg, #d0e4ee 0%, #d0e3ec 50%, #d2dcea 100%);
    color: #1a1a1a;
}

.win-logo {
    width: 16px;
    height: 16px;
    margin: 0 16px;
    color: #000;
}

.win-search {
    width: 288px;
    height: 40px;
    display: flex;
    align-items: center;
    padding-left: 12px;
    background-color: #fff;
    border: 1px solid #c8ccd0;
    overflow: hidden;
}

.ws-glass {
    width: 16px;
    height: 16px;
}

.ws-text {
    margin-left: 11px;
    font-family: 'Open Sans', sans-serif;
    font-size: 14px;
    color: #222;
}

.ws-scene {
    width: 79px;
    height: 38px;
    margin-left: auto;
}

.task-apps {
    display: flex;
    margin-left: 2px;
}

.task {
    position: relative;
    width: 49px;
    height: 40px;
    display: flex;
    align-items: center;
    justify-content: center;
}

.task.running::after {
    content: "";
    position: absolute;
    bottom: 0;
    left: 4px;
    width: 40px;
    height: 2px;
    background-color: #0078d4;
}

.task.current {
    background-color: #eaf3f7;
}

.task.current::after {
    left: 0;
    width: 49px;
}

.tk-ico {
    width: 24px;
    height: 24px;
}

.tk-fb {
    width: 24px;
    height: 24px;
    border-radius: 50%;
    background-color: #1877f2;
    color: #fff;
    font-family: 'Liberation Sans', sans-serif;
    font-weight: 700;
    font-size: 21px;
    line-height: 26px;
    text-align: center;
}

.tk-chrome {
    position: relative;
    width: 24px;
    height: 24px;
    border-radius: 50%;
    background:
        radial-gradient(circle, #4285f4 0 4.500px, #fff 5px 6px, transparent 6.500px),
        conic-gradient(from 90deg, #fbbc04 0 120deg, #34a853 0 240deg, #ea4335 0);
}

.tk-badge {
    position: absolute;
    right: -3px;
    bottom: -3px;
    width: 16px;
    height: 16px;
    border-radius: 50%;
    color: #fff;
    font-family: 'Roboto', sans-serif;
    font-size: 9px;
    font-style: normal;
    line-height: 16px;
    text-align: center;
}

.tk-badge.photo { background: radial-gradient(circle at 50% 35%, #c99a7a 0 4px, #fff 4.500px); }
.tk-badge.photo.dark { background: radial-gradient(circle at 50% 35%, #6b4a2a 0 4px, #a58a5a 4.500px); }
.tk-badge.green { background-color: #2e6b1f; }
.tk-badge.indigo { background-color: #5c6bc0; }
.tk-badge.purple { background-color: #7b1fa2; }

.tk-count {
    position: absolute;
    right: 4px;
    bottom: 4px;
    padding: 0 1px;
    border-radius: 2px;
    background-color: #ef3b3b;
    color: #fff;
    font-size: 9px;
    line-height: 11px;
}

.tray {
    margin-left: auto;
    display: flex;
    align-items: center;
    height: 40px;
    font-family: 'Open Sans', sans-serif;
}

.tr-weather {
    width: 24px;
    height: 24px;
}

.tr-temp {
    margin-left: 7px;
    font-size: 13px;
}

.tr-sky {
    margin-left: 11px;
    font-size: 13px;
}

.tr-chev {
    width: 12px;
    height: 8px;
    margin-left: 24px;
}

.tr-ico {
    width: 16px;
    height: 16px;
    margin-left: 10px;
}

.tr-ico.tr-net {
    margin-left: 7px;
}

.tr-lang {
    margin-left: 11px;
    font-size: 11px;
}

.tr-clock {
    width: 70px;
    margin-left: 9px;
    padding-bottom: 2px;
    display: flex;
    flex-direction: column;
    align-items: center;
    font-size: 11.500px;
    line-height: 17px;
}

.tr-notif {
    position: relative;
    width: 20px;
    height: 20px;
    margin-left: 13px;
}

.tr-msg {
    width: 18px;
    height: 18px;
    margin-top: 1px;
    color: #000;
}

.tr-count {
    position: absolute;
    left: 8px;
    top: 9px;
    width: 16px;
    height: 16px;
    border: 1px solid #888;
    border-radius: 50%;
    background-color: #d3dbe8;
    font-size: 10px;
    line-height: 14px;
    text-align: center;
}

.tr-edge {
    width: 1px;
    height: 40px;
    margin-left: 17px;
    margin-right: 4px;
    background-color: #aab4c0;
}
```
